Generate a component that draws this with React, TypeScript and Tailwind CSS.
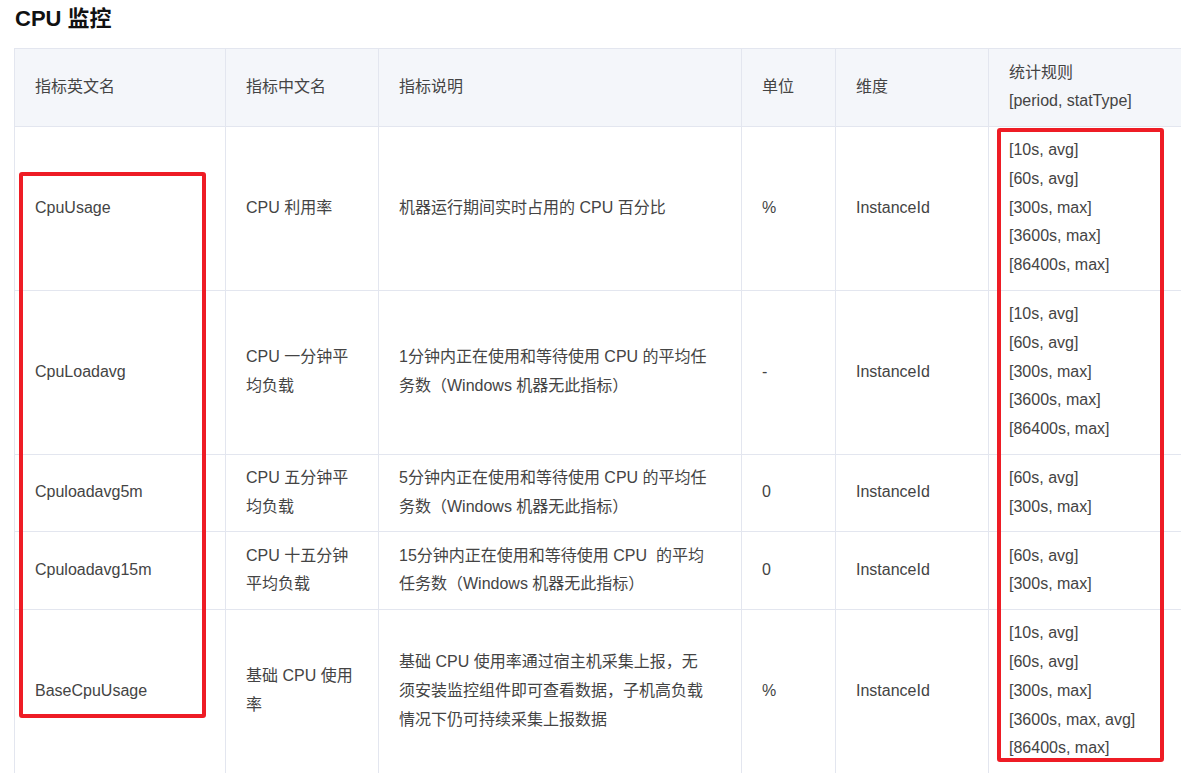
import React from "react";

interface MetricRow {
  en: string;
  cn: React.ReactNode;
  desc: React.ReactNode;
  unit: string;
  dim: string;
  rules: string[];
}

const rows: MetricRow[] = [
  {
    en: "CpuUsage",
    cn: "CPU 利用率",
    desc: "机器运行期间实时占用的 CPU 百分比",
    unit: "%",
    dim: "InstanceId",
    rules: ["[10s, avg]", "[60s, avg]", "[300s, max]", "[3600s, max]", "[86400s, max]"],
  },
  {
    en: "CpuLoadavg",
    cn: <>CPU 一分钟平<br />均负载</>,
    desc: <>1分钟内正在使用和等待使用 CPU 的平均任<br />务数（Windows 机器无此指标）</>,
    unit: "-",
    dim: "InstanceId",
    rules: ["[10s, avg]", "[60s, avg]", "[300s, max]", "[3600s, max]", "[86400s, max]"],
  },
  {
    en: "Cpuloadavg5m",
    cn: <>CPU 五分钟平<br />均负载</>,
    desc: <>5分钟内正在使用和等待使用 CPU 的平均任<br />务数（Windows 机器无此指标）</>,
    unit: "0",
    dim: "InstanceId",
    rules: ["[60s, avg]", "[300s, max]"],
  },
  {
    en: "Cpuloadavg15m",
    cn: <>CPU 十五分钟<br />平均负载</>,
    desc: <>15分钟内正在使用和等待使用 CPU&nbsp; 的平均<br />任务数（Windows 机器无此指标）</>,
    unit: "0",
    dim: "InstanceId",
    rules: ["[60s, avg]", "[300s, max]"],
  },
  {
    en: "BaseCpuUsage",
    cn: <>基础 CPU 使用<br />率</>,
    desc: (
      <>
        基础 CPU 使用率通过宿主机采集上报，无<br />
        须安装监控组件即可查看数据，子机高负载<br />
        情况下仍可持续采集上报数据
      </>
    ),
    unit: "%",
    dim: "InstanceId",
    rules: ["[10s, avg]", "[60s, avg]", "[300s, max]", "[3600s, max, avg]", "[86400s, max]"],
  },
];

const cell = "border border-[#e3e6ef] px-[20px] py-[9.5px] align-middle text-left font-normal";

export default function App() {
  return (
    <div
      className="relative w-[1181px] h-[773px] overflow-hidden bg-white text-[#444]"
      style={{ fontFamily: '"Liberation Sans", "Noto Sans CJK SC", sans-serif' }}
    >
      <div className="h-[48px] pl-[15px] pt-[4px] text-[22px] leading-[30px] font-bold text-[#111]">CPU 监控</div>

      <div className="pl-[14px]">
        <table className="table-fixed border-collapse w-[1374px] text-[16px] leading-[28.8px]">
          <colgroup>
            <col className="w-[211px]" />
            <col className="w-[153px]" />
            <col className="w-[363px]" />
            <col className="w-[94px]" />
            <col className="w-[153px]" />
            <col className="w-[400px]" />
          </colgroup>
          <thead>
            <tr className="bg-[#f4f6fa]">
              <th className={cell}>指标英文名</th>
              <th className={cell}>指标中文名</th>
              <th className={cell}>指标说明</th>
              <th className={cell}>单位</th>
              <th className={cell}>维度</th>
              <th className={cell}>
                统计规则
                <br />
                [period, statType]
              </th>
            </tr>
          </thead>
          <tbody>
            {rows.map((r) => (
              <tr key={r.en}>
                <td className={cell}>{r.en}</td>
                <td className={cell}>{r.cn}</td>
                <td className={cell}>{r.desc}</td>
                <td className={cell}>{r.unit}</td>
                <td className={cell}>{r.dim}</td>
                <td className={cell}>
                  {r.rules.map((rule, i) => (
                    <div key={i}>{rule}</div>
                  ))}
                </td>
              </tr>
            ))}
          </tbody>
        </table>
      </div>

      {/* red highlight boxes */}
      <div className="absolute left-[19px] top-[172px] w-[187px] h-[546px] border-4 border-[#ee1c25] rounded-[3px]" />
      <div className="absolute left-[997px] top-[128px] w-[167px] h-[634px] border-4 border-[#ee1c25] rounded-[3px]" />
    </div>
  );
}
